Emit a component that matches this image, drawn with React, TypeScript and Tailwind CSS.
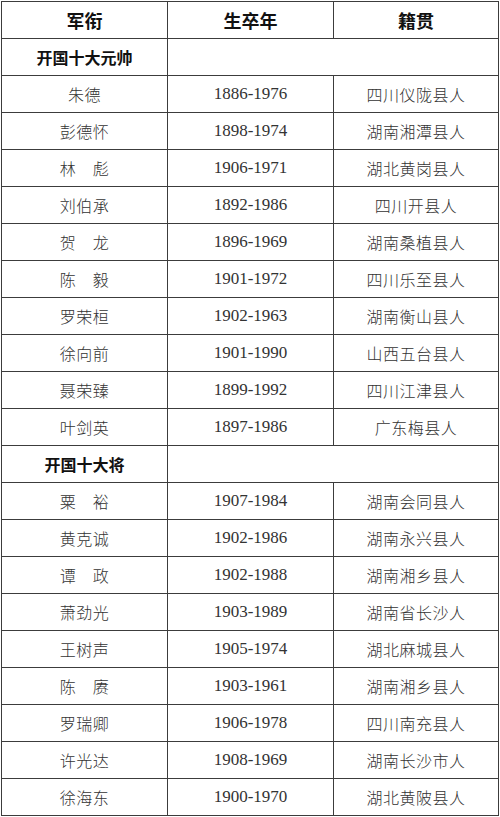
import React from "react"

/**
 * 开国十大元帅 / 开国十大将 表格
 */

type Person = { name: string; years: string; origin: string }

const marshals: Person[] = [
  { name: "朱德", years: "1886-1976", origin: "四川仪陇县人" },
  { name: "彭德怀", years: "1898-1974", origin: "湖南湘潭县人" },
  { name: "林　彪", years: "1906-1971", origin: "湖北黄岗县人" },
  { name: "刘伯承", years: "1892-1986", origin: "四川开县人" },
  { name: "贺　龙", years: "1896-1969", origin: "湖南桑植县人" },
  { name: "陈　毅", years: "1901-1972", origin: "四川乐至县人" },
  { name: "罗荣桓", years: "1902-1963", origin: "湖南衡山县人" },
  { name: "徐向前", years: "1901-1990", origin: "山西五台县人" },
  { name: "聂荣臻", years: "1899-1992", origin: "四川江津县人" },
  { name: "叶剑英", years: "1897-1986", origin: "广东梅县人" },
]

const generals: Person[] = [
  { name: "粟　裕", years: "1907-1984", origin: "湖南会同县人" },
  { name: "黄克诚", years: "1902-1986", origin: "湖南永兴县人" },
  { name: "谭　政", years: "1902-1988", origin: "湖南湘乡县人" },
  { name: "萧劲光", years: "1903-1989", origin: "湖南省长沙人" },
  { name: "王树声", years: "1905-1974", origin: "湖北麻城县人" },
  { name: "陈　赓", years: "1903-1961", origin: "湖南湘乡县人" },
  { name: "罗瑞卿", years: "1906-1978", origin: "四川南充县人" },
  { name: "许光达", years: "1908-1969", origin: "湖南长沙市人" },
  { name: "徐海东", years: "1900-1970", origin: "湖北黄陂县人" },
]

const cjk = "font-['Noto_Sans_CJK_SC',sans-serif]"
const serif = "font-['Liberation_Serif','Noto_Sans_CJK_SC',serif]"
const row = "grid h-[37px] grid-cols-[166px_166px_165px] border-b border-[#3c3c3c]"
const cell = "flex items-center justify-center border-r border-[#3c3c3c]"

function SectionRow({ title }: { title: string }) {
  return (
    <div className={row}>
      <div className={`${cell} ${cjk} text-[16px] font-bold text-[#111]`}>{title}</div>
      <div className={`${cell} col-span-2`} />
    </div>
  )
}

function PersonRow({ p }: { p: Person }) {
  return (
    <div className={row}>
      <div className={`${cell} ${cjk} text-[16px] font-light tracking-[0.5px] text-[#333]`}>{p.name}</div>
      <div className={`${cell} ${serif} pb-[1px] text-[17px] text-[#333]`}>{p.years}</div>
      <div className={`${cell} ${cjk} text-[16px] font-light tracking-[0.5px] text-[#333]`}>{p.origin}</div>
    </div>
  )
}

export default function App() {
  return (
    <div className="min-h-[817px] w-[500px] bg-white pl-[1px] pt-[1px]">
      <div className="w-[498px] border-l border-t border-[#3c3c3c]">
        {/* Header */}
        <div className={row}>
          <div className={`${cell} ${cjk} text-[18px] font-bold text-[#111]`}>军衔</div>
          <div className={`${cell} ${cjk} text-[18px] font-bold text-[#111]`}>生卒年</div>
          <div className={`${cell} ${cjk} text-[18px] font-bold text-[#111]`}>籍贯</div>
        </div>

        <SectionRow title="开国十大元帅" />
        {marshals.map((p) => (
          <PersonRow key={p.name} p={p} />
        ))}

        <SectionRow title="开国十大将" />
        {generals.map((p) => (
          <PersonRow key={p.name} p={p} />
        ))}
      </div>
    </div>
  )
}
